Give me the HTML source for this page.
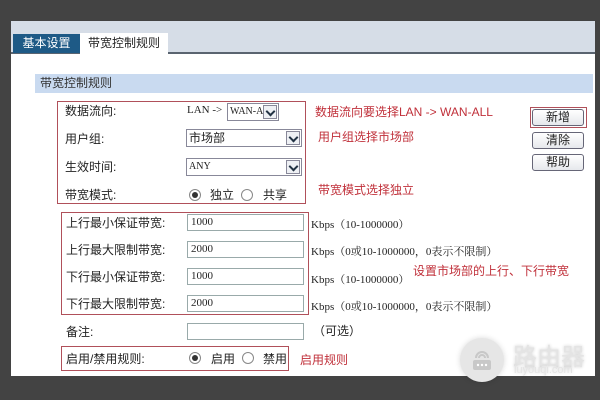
<!DOCTYPE html>
<html><head><meta charset="utf-8"><style>
*{margin:0;padding:0;box-sizing:border-box}
body{width:600px;height:400px;background:#434343;position:relative;overflow:hidden;font-family:"Liberation Sans","Noto Sans CJK SC",sans-serif;font-size:12px;color:#222}
.a{position:absolute}
.panel{left:11px;top:21px;width:584px;height:355px;background:#fff}
.lbl{font-size:12px;line-height:14px}
.red{border:1px solid #b0505a}
.rt{color:#c0303a;font-size:12px}
.inp{border:1px solid #9aa;background:#fff;height:17px;font-family:"Liberation Serif",serif;font-size:11px;padding-left:3px;line-height:15px}
.sel{border:1px solid #889;background:#fff;height:18px;font-size:12px;padding-left:2px;line-height:16px}
.arr{position:absolute;right:1px;top:1px;width:14px;height:14px;border:1px solid #889;background:#eef0f4}
.arr:after{content:"";position:absolute;left:3px;top:2px;width:5px;height:5px;border-right:2px solid #234;border-bottom:2px solid #234;transform:rotate(45deg)}
.kb{font-family:"Liberation Serif","Noto Serif CJK SC",serif;font-size:11px}
.rad{width:12px;height:12px;border:1px solid #888;border-radius:50%;background:#fff}
.rad.on:after{content:"";position:absolute;left:2px;top:2px;width:6px;height:6px;border-radius:50%;background:#333}
.btn{border:1px solid #667;border-radius:3px;background:linear-gradient(#fff,#e6e8ec);width:52px;height:17px;text-align:center;line-height:15px;font-size:12px}
</style></head><body>
<div class="a panel"></div>
<div class="a" style="left:11px;top:21px;width:584px;height:31px;background:#d6dde7"></div>
<div class="a" style="left:11px;top:52px;width:584px;height:2px;background:#5a6470"></div>
<div class="a" style="left:13px;top:34px;width:67px;height:19px;background:#1e5a86;color:#fff;line-height:19px;text-align:center">基本设置</div>
<div class="a" style="left:80px;top:33px;width:88px;height:21px;background:#fff;line-height:20px;text-align:center">带宽控制规则</div>
<div class="a" style="left:35px;top:74px;width:558px;height:19px;background:#c9daf0;line-height:19px;padding-left:5px;color:#333">带宽控制规则</div>

<div class="a red" style="left:57px;top:101px;width:249px;height:103px"></div>
<div class="a lbl" style="left:65px;top:104px">数据流向:</div>
<div class="a kb" style="left:187px;top:104px">LAN -&gt;</div>
<div class="a sel kb" style="left:227px;top:103px;width:52px;font-size:10px">WAN-AL<div class="arr"></div></div>
<div class="a lbl" style="left:65px;top:132px">用户组:</div>
<div class="a sel" style="left:186px;top:129px;width:116px">市场部<div class="arr"></div></div>
<div class="a lbl" style="left:65px;top:160px">生效时间:</div>
<div class="a sel kb" style="left:186px;top:158px;width:116px;font-size:10px">ANY<div class="arr"></div></div>
<div class="a lbl" style="left:65px;top:188px">带宽模式:</div>
<div class="a rad on" style="left:189px;top:189px"></div>
<div class="a lbl" style="left:210px;top:188px">独立</div>
<div class="a rad" style="left:241px;top:189px"></div>
<div class="a lbl" style="left:263px;top:188px">共享</div>

<div class="a rt" style="left:315px;top:103px">数据流向要选择LAN -&gt; WAN-ALL</div>
<div class="a rt" style="left:318px;top:128px">用户组选择市场部</div>
<div class="a rt" style="left:318px;top:181px">带宽模式选择独立</div>

<div class="a red" style="left:530px;top:107px;width:57px;height:21px"></div>
<div class="a btn" style="left:532px;top:109px">新增</div>
<div class="a btn" style="left:532px;top:132px">清除</div>
<div class="a btn" style="left:532px;top:154px">帮助</div>

<div class="a red" style="left:61px;top:212px;width:248px;height:103px"></div>
<div class="a lbl" style="left:66px;top:216px">上行最小保证带宽:</div>
<div class="a inp" style="left:187px;top:214px;width:117px">1000</div>
<div class="a kb" style="left:311px;top:216px">Kbps（10-1000000）</div>
<div class="a lbl" style="left:66px;top:243px">上行最大限制带宽:</div>
<div class="a inp" style="left:187px;top:241px;width:117px">2000</div>
<div class="a kb" style="left:311px;top:243px">Kbps（0或10-1000000，0表示不限制）</div>
<div class="a lbl" style="left:66px;top:270px">下行最小保证带宽:</div>
<div class="a inp" style="left:187px;top:268px;width:117px">1000</div>
<div class="a kb" style="left:311px;top:271px">Kbps（10-1000000）</div>
<div class="a rt" style="left:413px;top:262px">设置市场部的上行、下行带宽</div>
<div class="a lbl" style="left:66px;top:297px">下行最大限制带宽:</div>
<div class="a inp" style="left:187px;top:295px;width:117px">2000</div>
<div class="a kb" style="left:311px;top:298px">Kbps（0或10-1000000，0表示不限制）</div>

<div class="a lbl" style="left:66px;top:325px">备注:</div>
<div class="a inp" style="left:187px;top:323px;width:117px"></div>
<div class="a lbl" style="left:313px;top:324px">（可选）</div>

<div class="a red" style="left:61px;top:346px;width:228px;height:25px"></div>
<div class="a lbl" style="left:66px;top:352px">启用/禁用规则:</div>
<div class="a rad on" style="left:189px;top:352px"></div>
<div class="a lbl" style="left:211px;top:352px">启用</div>
<div class="a rad" style="left:242px;top:352px"></div>
<div class="a lbl" style="left:263px;top:352px">禁用</div>
<div class="a rt" style="left:300px;top:351px">启用规则</div>

<div class="a" style="left:460px;top:338px;width:44px;height:44px;border-radius:50%;background:#e6e6e6;box-shadow:0 0 6px rgba(0,0,0,0.15)"></div>
<svg class="a" style="left:468px;top:346px" width="28" height="28" viewBox="0 0 28 28"><path d="M8 12a6 6 0 0 1 12 0M11 12a3 3 0 0 1 6 0" stroke="#c8c8c8" stroke-width="2" fill="none"/><rect x="5" y="14" width="18" height="10" rx="2" fill="#c8c8c8"/><circle cx="10" cy="19" r="1.2" fill="#fff"/><circle cx="14" cy="19" r="1.2" fill="#fff"/><circle cx="18" cy="19" r="1.2" fill="#fff"/></svg>
<div class="a" style="left:513px;top:337px;font-size:24px;color:#e4e4e4;text-shadow:0 0 3px rgba(0,0,0,0.2)">路由器</div>
<div class="a" style="left:514px;top:364px;font-size:11px;color:#e4e4e4;text-shadow:0 0 3px rgba(0,0,0,0.2)">luyouqi.com</div>
</body></html>
